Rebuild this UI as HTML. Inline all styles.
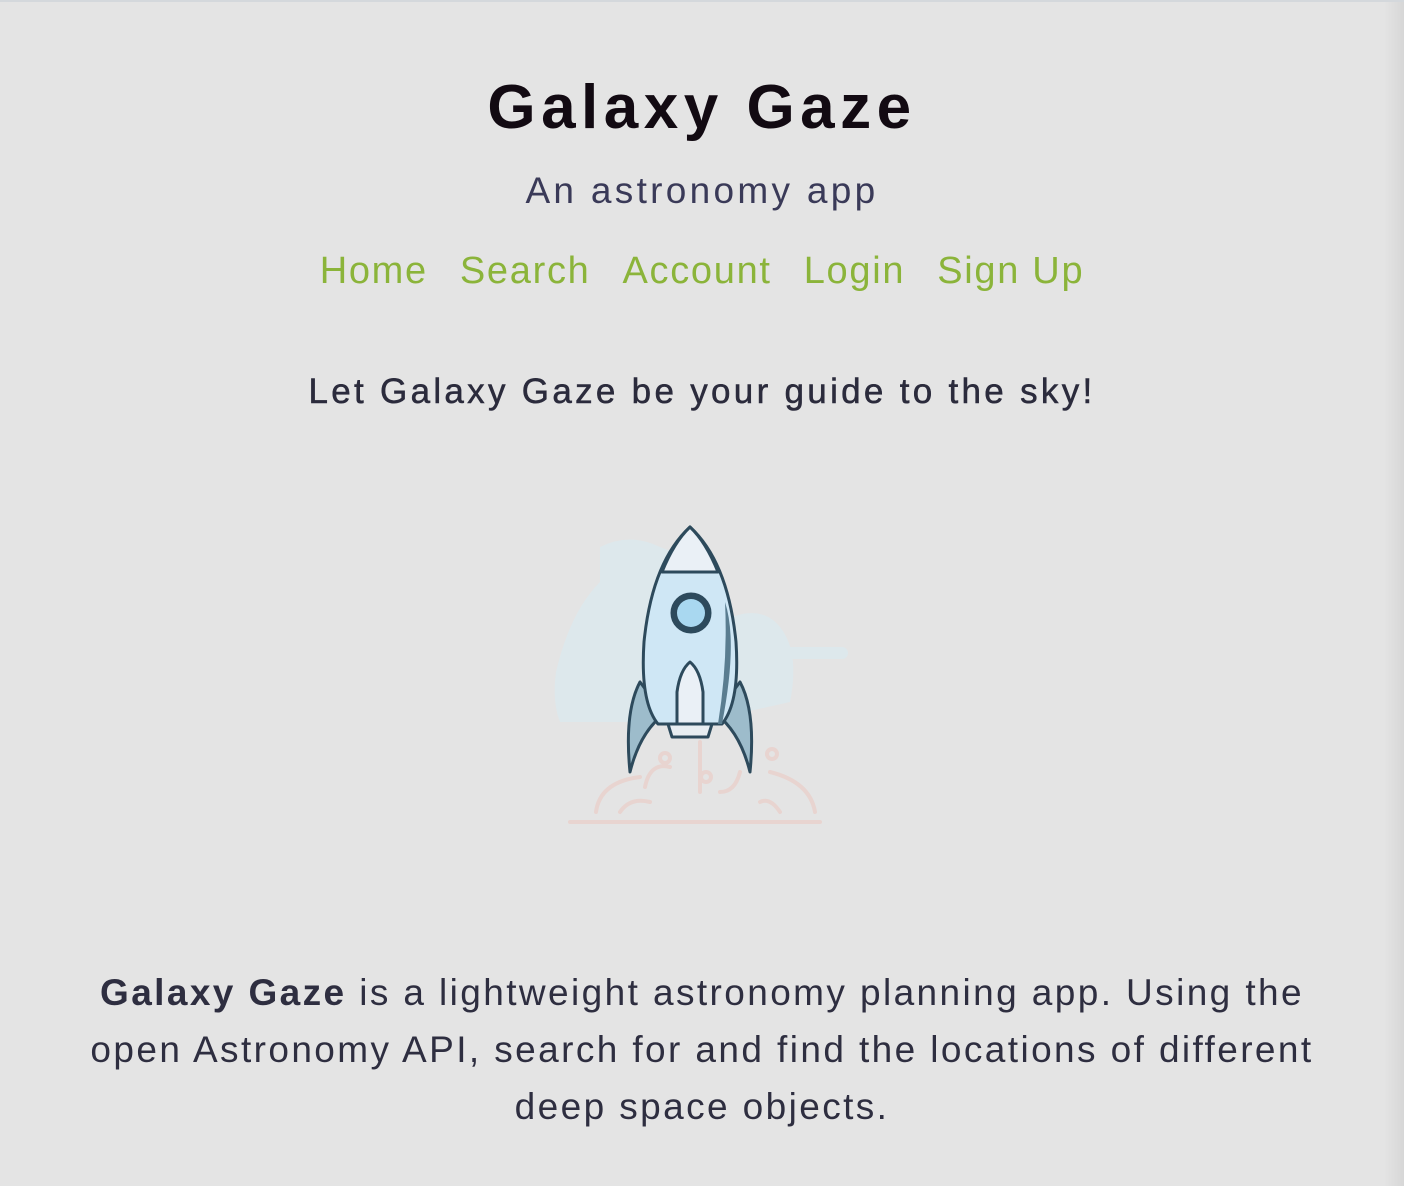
<!DOCTYPE html>
<html><head><meta charset="utf-8"><style>
html,body{margin:0;padding:0}
body{width:1404px;height:1184px;background:#e4e4e4;font-family:"Liberation Sans",sans-serif;position:relative;overflow:hidden;border-top:2px solid #d4d8dc;box-sizing:border-box}
.shade{position:absolute;right:0;top:0;width:20px;height:1184px;background:linear-gradient(to right,rgba(0,0,0,0),rgba(0,0,0,0.06))}
.c{position:absolute;left:0;width:1404px;text-align:center;white-space:nowrap}
h1{margin:0;font-size:62px;font-weight:bold;color:#120a12;top:70px;letter-spacing:5.5px}
.sub{top:168px;font-size:37px;color:#3a3a58;letter-spacing:3.3px}
.nav{top:248px;font-size:38px;color:#8bb43a;letter-spacing:1.7px}
.nav span{margin:0 16px}
.tag{top:370px;font-size:35px;color:#2b2b3c;letter-spacing:3.3px;-webkit-text-stroke:0.5px #2b2b3c}
.p{top:962px;font-size:37px;line-height:57px;color:#2e2e40;letter-spacing:2.4px}
</style></head><body>
<div class="shade"></div>
<h1 class="c">Galaxy Gaze</h1>
<div class="c sub">An astronomy app</div>
<div class="c nav"><span>Home</span><span>Search</span><span>Account</span><span>Login</span><span>Sign Up</span></div>
<div class="c tag">Let Galaxy Gaze be your guide to the sky!</div>
<svg style="position:absolute;left:0;top:0" width="1404" height="1184" viewBox="0 0 1404 1184">
<g fill="#dde8ec">
<path d="M600 545 Q630 530 660 545 L700 560 L700 720 L560 720 Q552 700 556 670 Q570 610 600 580 Z"/>
<path d="M720 620 Q760 600 780 625 Q800 650 790 700 L700 720 Z"/>
<rect x="740" y="645" width="108" height="12" rx="6"/>
<rect x="560" y="655" width="60" height="8" rx="4"/>
</g>
<g fill="none" stroke="#e8d4d0" stroke-width="4" stroke-linecap="round">
<path d="M570 820 H820"/>
<path d="M596 810 Q600 780 640 775"/><path d="M815 810 Q810 780 770 770"/>
<path d="M645 785 Q650 760 670 765"/><path d="M700 790 V740"/>
<path d="M740 770 Q735 790 720 790"/><path d="M620 810 Q630 795 650 800"/><path d="M780 810 Q770 795 760 800"/>
<circle cx="665" cy="756" r="5"/><circle cx="706" cy="775" r="5"/><circle cx="772" cy="752" r="5"/>
</g>
<g stroke="#2d4a5c" stroke-width="3" stroke-linejoin="round">
<path d="M640 680 Q624 710 630 770 Q640 730 664 712 Z" fill="#9dbccb"/>
<path d="M740 680 Q756 710 750 770 Q740 730 716 712 Z" fill="#9dbccb"/>
<path d="M690 525 Q728 560 736 640 Q740 700 722 722 L658 722 Q640 700 644 640 Q652 560 690 525 Z" fill="#cfe7f5"/>
<path d="M662 570 Q674 540 690 525 Q706 540 718 570 Z" fill="#eaf0f6"/>
<path d="M668 722 L672 735 L708 735 L712 722 Z" fill="#e8eef2"/>
<path d="M690 660 Q700 668 703 690 L703 722 L677 722 L677 690 Q680 668 690 660 Z" fill="#eaf0f6"/>
<circle cx="691" cy="611" r="19" fill="#2d4a5c"/>
<circle cx="691" cy="611" r="14" fill="#a9d8f0" stroke="none"/>
</g>
<path d="M725 600 Q738 640 722 722 L718 722 Q728 660 725 600Z" fill="#5a7d90"/>
</svg>
<div class="c p"><b>Galaxy Gaze</b> is a lightweight astronomy planning app. Using the<br>open Astronomy API, search for and find the locations of different<br>deep space objects.</div>
</body></html>
